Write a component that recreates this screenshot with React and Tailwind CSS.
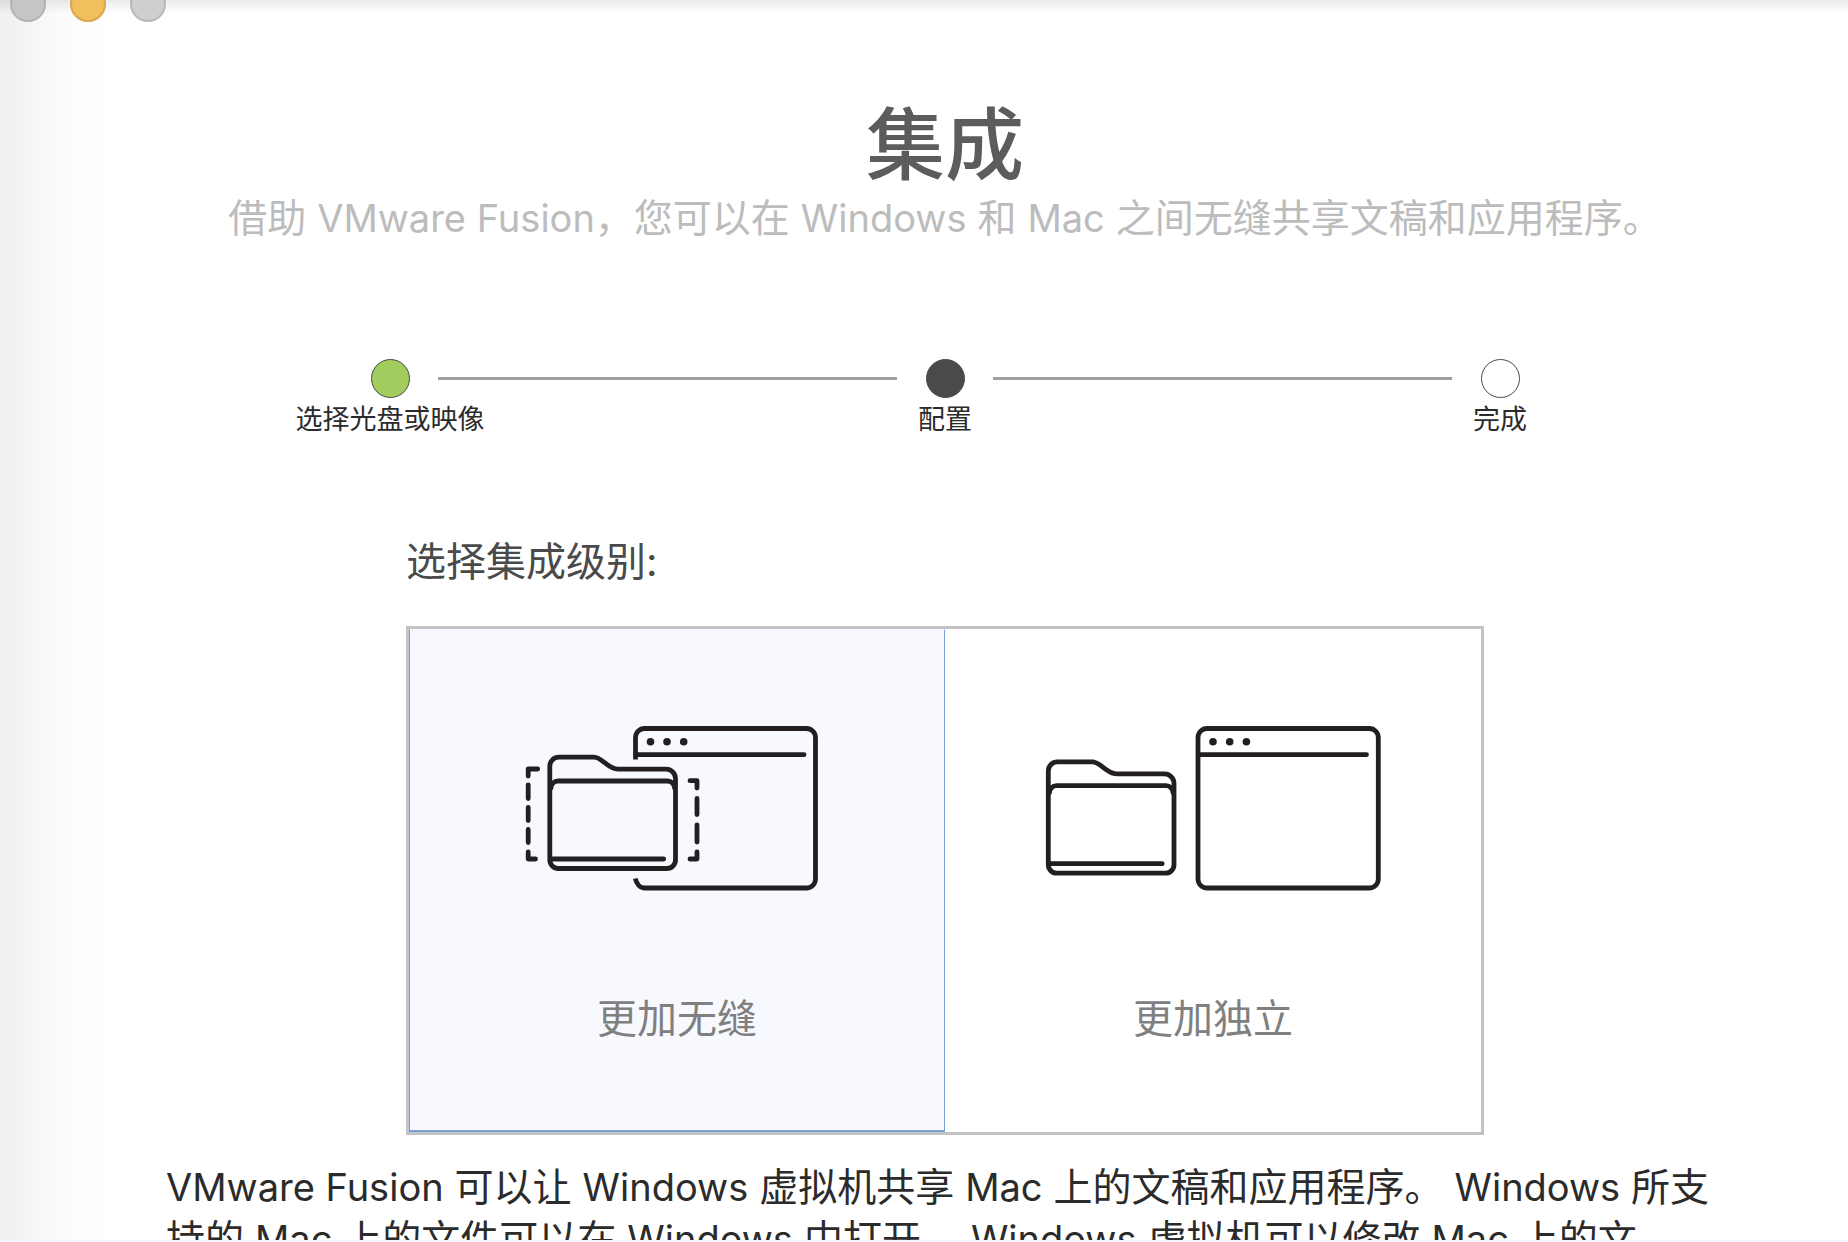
import { useState } from 'react';

const steps = [
  { label: '选择光盘或映像', dot: 'bg-[#a0cd5d] border-[#4a4a4a]' },
  { label: '配置', dot: 'bg-[#4a4a4a] border-[#4a4a4a]' },
  { label: '完成', dot: 'bg-white border-[#4a4a4a]' },
];

const SeamlessIcon = () => (
  <svg
    viewBox="-13 0 380 210"
    className="w-[380px] h-[210px]"
    fill="none"
    stroke="#231f20"
    strokeWidth="4.8"
    strokeLinecap="round"
    strokeLinejoin="round"
    aria-hidden="true"
  >
    {/* Window */}
    <path d="M135.5 59.5V37.5a9 9 0 0 1 9-9H306.5a9 9 0 0 1 9 9V179a9 9 0 0 1-9 9H145c-5 0-8.500-4-9.700-9.500" strokeLinecap="butt" />
    <path d="M137 54.700H304" />
    <g fill="#231f20" stroke="none">
      <circle cx="150.500" cy="41.700" r="3.800" />
      <circle cx="167" cy="41.700" r="3.800" />
      <circle cx="183.700" cy="41.700" r="3.800" />
    </g>
    {/* Folder */}
    <path d="M49.800 160V66a9 9 0 0 1 9-8.800H94c8 0 14 12 24 12H166a9.500 9.500 0 0 1 9.500 9.500V160a8.500 8.500 0 0 1-8.500 8.500H58.300a8.500 8.500 0 0 1-8.500-8.500Z" />
    <path d="M51 88a7 7 0 0 1 7-7H167.500a7 7 0 0 1 7 7M51 159H163.700" />
    {/* Dashed outline */}
    <path d="M37.700 69H28.200V76M28.200 85V98.500M28.200 107.500V120.500M28.200 129.500V142.500M28.200 152V159H35.500" />
    <path d="M190 80.700H197V88M197 98.500V114.500M197 125V142M197 152V159H190" />
  </svg>
);

const IsolatedIcon = () => (
  <svg
    viewBox="3 0 380 210"
    className="w-[380px] h-[210px]"
    fill="none"
    stroke="#231f20"
    strokeWidth="4.8"
    strokeLinecap="round"
    strokeLinejoin="round"
    aria-hidden="true"
  >
    {/* Window */}
    <rect x="178" y="28.500" width="180.300" height="159.500" rx="9" />
    <path d="M180 54.700H346.500" />
    <g fill="#231f20" stroke="none">
      <circle cx="193" cy="41.700" r="3.800" />
      <circle cx="209.700" cy="41.700" r="3.800" />
      <circle cx="226.400" cy="41.700" r="3.800" />
    </g>
    {/* Folder */}
    <path d="M28.300 164.700V70.700a9 9 0 0 1 9-8.800H72.500c8 0 14 12 24 12H144.500a9.500 9.500 0 0 1 9.500 9.500V164.700a8.500 8.500 0 0 1-8.500 8.500H36.800a8.500 8.500 0 0 1-8.500-8.500Z" />
    <path d="M29.500 92.700a7 7 0 0 1 7-7H146a7 7 0 0 1 7 7M29.500 163.700H142.200" />
  </svg>
);

const levels = [
  { id: 'seamless', label: '更加无缝', Icon: SeamlessIcon },
  { id: 'isolated', label: '更加独立', Icon: IsolatedIcon },
];

// Latin words sit a touch smaller than the Chinese text around them
const En = ({ children }) => (
  <span lang="en" className="text-[38px]">{children}</span>
);

const TitleBar = () => (
  <header className="flex h-[22px] shrink-0 items-end gap-6 overflow-hidden bg-linear-to-b from-black/8 to-transparent to-60% pl-[10px]">
    <button type="button" aria-label="关闭" className="size-9 shrink-0 rounded-full border-2 border-[#b2b2b2] bg-[#c6c6c6]" />
    <button type="button" aria-label="最小化" className="size-9 shrink-0 rounded-full border-2 border-[#d9a648] bg-[#efc05c]" />
    <button type="button" aria-label="缩放" className="size-9 shrink-0 rounded-full border-2 border-[#b8b8b8] bg-[#cfcfcf]" />
  </header>
);

const Stepper = () => (
  <ol className="mx-auto flex w-full max-w-[1206px] items-start">
    {steps.map((step, i) => (
      <li key={step.label} className={i > 0 ? 'flex flex-1 items-start' : 'flex items-start'}>
        {i > 0 && <div className="mt-[18px] h-[3px] flex-1 bg-[#a0a0a0]" />}
        <div className="flex w-24 flex-col items-center">
          <div className={`size-[39px] rounded-full border ${step.dot}`} />
          <span className="mt-1 text-[27px] leading-9 whitespace-nowrap text-[#2b2b2b]">{step.label}</span>
        </div>
      </li>
    ))}
  </ol>
);

const App = () => {
  const [level, setLevel] = useState('seamless');

  return (
    <div className="flex h-screen flex-col overflow-hidden bg-white bg-linear-to-r from-[#efefef] via-[#fbfbfb] via-[56px] to-white to-[114px] font-['Inter','Noto_Sans_CJK_SC',sans-serif]">
      <TitleBar />

      <main className="min-h-0 flex-1 overflow-hidden pt-[81px] pl-[42px]">
        <h1 className="text-center text-[79px] leading-[84px] font-medium text-[#5c5c5c]">集成</h1>
        <p className="text-center text-[39px] leading-[62px] text-[#bcbcbc]">
          借助 <En>VMware Fusion</En>，您可以在 <En>Windows</En> 和 <En>Mac</En> 之间无缝共享文稿和应用程序。
        </p>

        <div className="mt-[110px]">
          <Stepper />
        </div>

        <fieldset className="mx-auto mt-24 w-full max-w-[1078px]">
          <legend className="mb-9 text-[40px] leading-[56px] text-[#4a4a4a]">选择集成级别:</legend>
          <div className="grid grid-cols-2 border-3 border-[#c3c3c3]">
            {levels.map(({ id, label, Icon }) => (
              <label
                key={id}
                className={`relative flex flex-col items-center border border-b-2 pt-[70px] pb-[81px] ${
                  level === id ? 'border-[#7d9fd8] border-t-transparent bg-[#f7f9ff]' : 'border-transparent bg-white'
                }`}
              >
                <input
                  type="radio"
                  name="level"
                  value={id}
                  checked={level === id}
                  onChange={() => setLevel(id)}
                  className="sr-only"
                />
                <Icon />
                <span className="mt-[79px] text-[40px] leading-[60px] text-[#808080]">{label}</span>
              </label>
            ))}
          </div>
        </fieldset>

        <p className="mr-[116px] ml-[124px] mt-[26px] text-[39px] leading-[52px] text-[#2b2b2b]">
          <En>VMware Fusion</En> 可以让 <En>Windows</En> 虚拟机共享 <En>Mac</En> 上的文稿和应用程序。 <En>Windows</En> 所支<br />
          持的 <En>Mac</En> 上的文件可以在 <En>Windows</En> 中打开。 <En>Windows</En> 虚拟机可以修改 <En>Mac</En> 上的文
        </p>
      </main>

      <div className="h-[2px] shrink-0 bg-[#f5f7fb]" />
    </div>
  );
};

export default App;
